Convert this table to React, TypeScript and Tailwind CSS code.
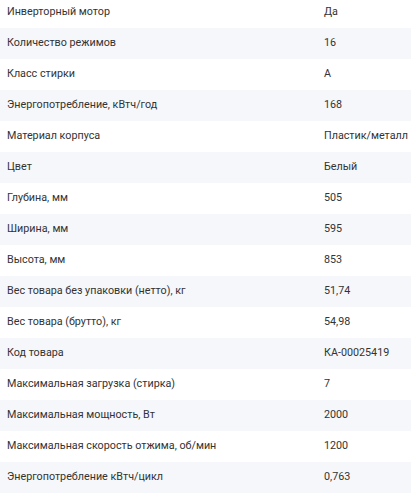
import React from "react";

const rows: [string, string][] = [
  ["Инверторный мотор", "Да"],
  ["Количество режимов", "16"],
  ["Класс стирки", "A"],
  ["Энергопотребление, кВтч/год", "168"],
  ["Материал корпуса", "Пластик/металл"],
  ["Цвет", "Белый"],
  ["Глубина, мм", "505"],
  ["Ширина, мм", "595"],
  ["Высота, мм", "853"],
  ["Вес товара без упаковки (нетто), кг", "51,74"],
  ["Вес товара (брутто), кг", "54,98"],
  ["Код товара", "КА-00025419"],
  ["Максимальная загрузка (стирка)", "7"],
  ["Максимальная мощность, Вт", "2000"],
  ["Максимальная скорость отжима, об/мин", "1200"],
  ["Энергопотребление кВтч/цикл", "0,763"],
];

export default function App() {
  return (
    <div className="w-[411px] h-[500px] overflow-hidden bg-white font-[Roboto,sans-serif]">
      <div className="mt-[-3px] flex flex-col">
        {rows.map(([k, v], i) => (
          <div
            key={i}
            className={`grid grid-cols-[324px_1fr] h-[31px] items-center text-[10.75px] text-[#333333] ${i % 2 === 1 ? "bg-[#f6f7fa]" : "bg-white"}`}
          >
            <div className="pl-[7px] whitespace-nowrap overflow-hidden">{k}</div>
            <div className="whitespace-nowrap">{v}</div>
          </div>
        ))}
      </div>
    </div>
  );
}
